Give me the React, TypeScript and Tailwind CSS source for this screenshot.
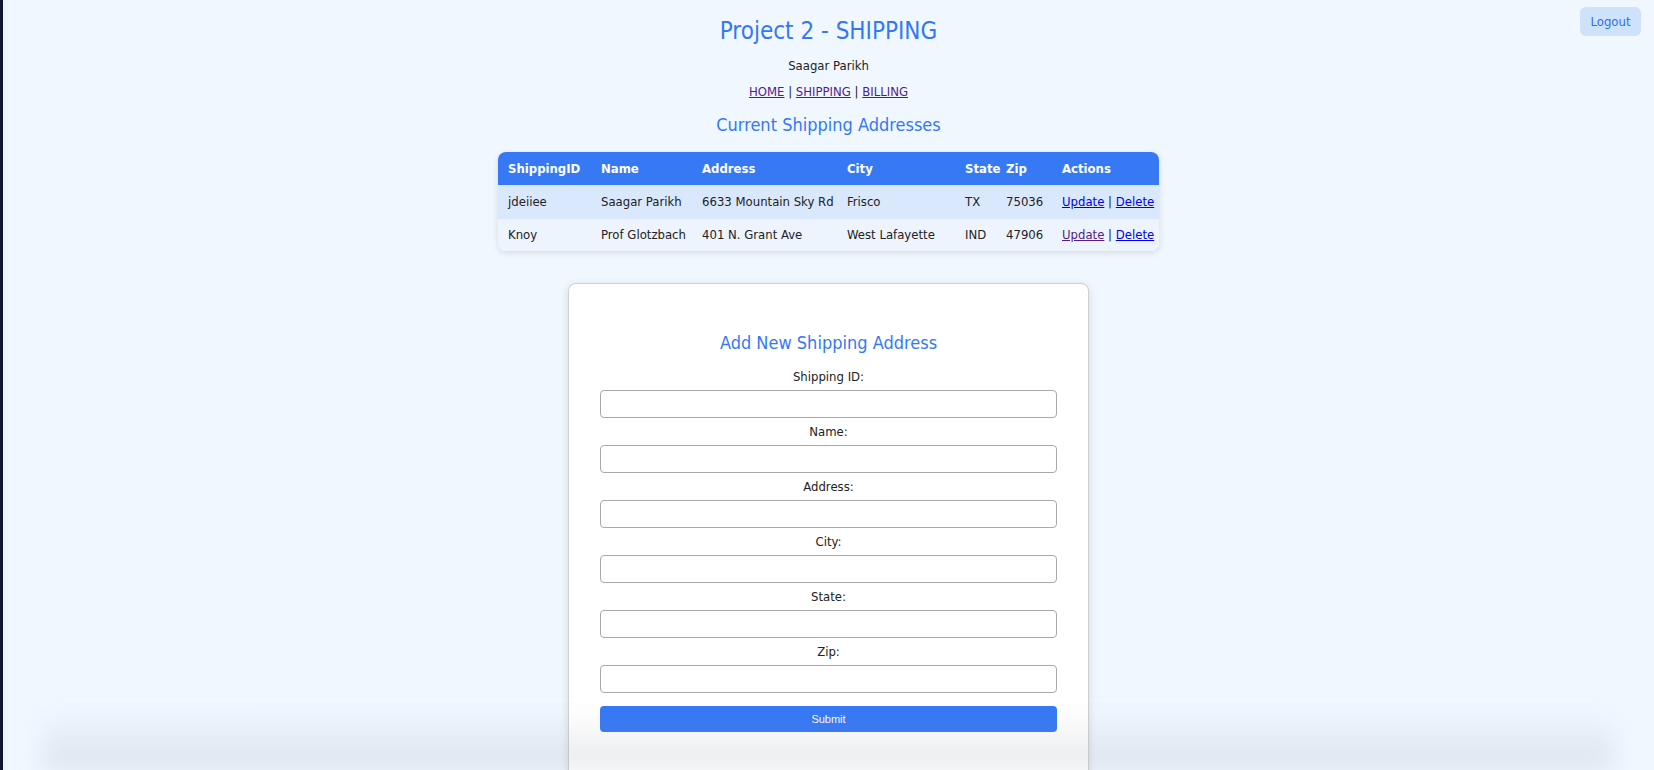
const rows = [
  { id: "jdeiiee", name: "Saagar Parikh", address: "6633 Mountain Sky Rd", city: "Frisco", state: "TX", zip: "75036", visited: false },
  { id: "Knoy", name: "Prof Glotzbach", address: "401 N. Grant Ave", city: "West Lafayette", state: "IND", zip: "47906", visited: true },
];

const fields = ["Shipping ID:", "Name:", "Address:", "City:", "State:", "Zip:"];

export default function App() {
  return (
    <div className="relative min-h-[770px] h-[770px] overflow-hidden bg-[#f0f7ff] border-l-[3px] border-[#121633] font-['DejaVu_Sans_Condensed','DejaVu_Sans',sans-serif] text-[#222]">
      <button className="absolute right-[13px] top-[7px] h-[29px] w-[61px] rounded-md bg-[#cfe2fb] text-[13px] text-[#2f6fe6]">
        Logout
      </button>

      <div className="flex flex-col items-center pt-[16px]">
        <h1 className="text-[24px] leading-[30px] text-[#3478f6]">Project 2 - SHIPPING</h1>
        <p className="mt-[11px] text-[13px] leading-[18px]">Saagar Parikh</p>
        <nav className="mt-[8px] text-[13px] leading-[18px]">
          <a href="#" className="underline text-[#551a8b]">HOME</a> |{" "}
          <a href="#" className="underline text-[#551a8b]">SHIPPING</a> |{" "}
          <a href="#" className="underline text-[#551a8b]">BILLING</a>
        </nav>
        <h2 className="mt-[12px] text-[18px] leading-[24px] text-[#3478f6]">Current Shipping Addresses</h2>

        {/* tabla de direcciones */}
        <div className="mt-[15px] w-[661px] overflow-hidden rounded-lg shadow-[0_2px_6px_rgba(0,0,0,0.12)]">
          <table className="w-full table-fixed border-collapse text-left text-[13px]">
            <colgroup>
              <col className="w-[93px]" />
              <col className="w-[101px]" />
              <col className="w-[145px]" />
              <col className="w-[118px]" />
              <col className="w-[41px]" />
              <col className="w-[56px]" />
              <col />
            </colgroup>
            <thead>
              <tr className="h-[33px] bg-[#3779f5] text-white">
                <th className="pl-[10px] font-bold whitespace-nowrap">ShippingID</th>
                <th className="pl-[10px] font-bold">Name</th>
                <th className="pl-[10px] font-bold">Address</th>
                <th className="pl-[10px] font-bold">City</th>
                <th className="pl-[10px] font-bold">State</th>
                <th className="pl-[10px] font-bold">Zip</th>
                <th className="pl-[10px] font-bold">Actions</th>
              </tr>
            </thead>
            <tbody>
              {rows.map((r, i) => (
                <tr key={r.id} className={i === 0 ? "h-[34px] bg-[#dae8fd]" : "h-[32px] bg-[#edf4fe]"}>
                  <td className="pl-[10px] whitespace-nowrap">{r.id}</td>
                  <td className="pl-[10px] whitespace-nowrap">{r.name}</td>
                  <td className="pl-[10px] whitespace-nowrap">{r.address}</td>
                  <td className="pl-[10px] whitespace-nowrap">{r.city}</td>
                  <td className="pl-[10px] whitespace-nowrap">{r.state}</td>
                  <td className="pl-[10px] whitespace-nowrap">{r.zip}</td>
                  <td className="pl-[10px] whitespace-nowrap">
                    <a href="#" className={r.visited ? "underline text-[#551a8b]" : "underline text-[#0000ee]"}>Update</a> |{" "}
                    <a href="#" className="underline text-[#0000ee]">Delete</a>
                  </td>
                </tr>
              ))}
            </tbody>
          </table>
        </div>

        {/* formulario para nueva direccion */}
        <div className="mt-[32px] w-[521px] rounded-lg border border-[#d0d0d0] bg-white px-[31px] pt-[47px] pb-[70px] shadow-[0_2px_8px_rgba(0,0,0,0.12)]">
          <h2 className="text-center text-[18px] leading-[24px] text-[#3478f6]">Add New Shipping Address</h2>
          <form className="mt-[13px] flex flex-col">
            {fields.map((f) => (
              <div key={f} className="mb-[5px] flex flex-col items-center">
                <label className="text-[13px] leading-[18px] text-[#222]">{f}</label>
                <input className="mt-[4px] h-[28px] w-full rounded border border-[#a9a9a9] bg-white" />
              </div>
            ))}
            <button
              type="button"
              className="mt-[8px] h-[26px] w-full rounded bg-[#3578f6] font-['Liberation_Sans',sans-serif] text-[11px] text-white"
            >
              Submit
            </button>
          </form>
        </div>
      </div>

      <div className="pointer-events-none absolute bottom-0 left-[40px] right-[40px] h-[60px] bg-gradient-to-b from-transparent to-[rgba(140,150,165,0.22)] blur-md" />
    </div>
  );
}
